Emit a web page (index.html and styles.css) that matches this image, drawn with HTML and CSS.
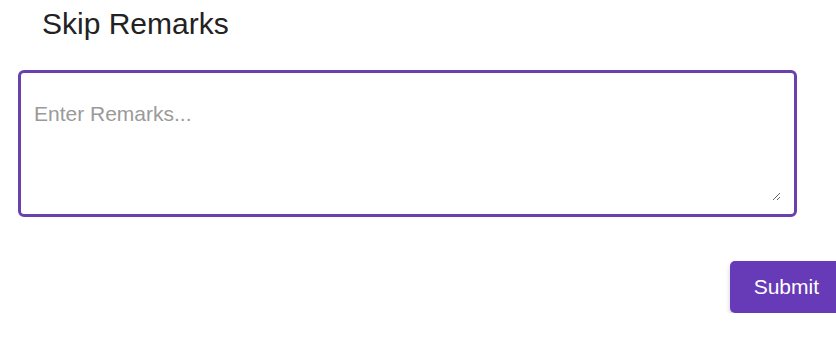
FILE: index.html
```html
<!DOCTYPE html>
<html>
<head>
<meta charset="utf-8">
<link rel="stylesheet" href="styles.css">
</head>
<body>
<div class="page">
  <h2 class="title">Skip Remarks</h2>
  <div class="field">
    <textarea class="remarks" placeholder="Enter Remarks..."></textarea>
  </div>
  <div class="actions">
    <button class="submit">Submit</button>
  </div>
</div>
</body>
</html>
```
FILE: styles.css
```css
html, body {
  margin: 0;
  padding: 0;
  background: #ffffff;
  overflow: hidden;
}
.page {
  font-family: "Liberation Sans", Arial, sans-serif;
  padding: 0 0 0 18px;
  display: flex;
  flex-direction: column;
}
.title {
  margin: 6px 0 0 24px;
  font-size: 30px;
  font-weight: 400;
  line-height: 36px;
  color: #222222;
}
.field {
  margin-top: 28px;
  box-sizing: border-box;
  width: 779px;
  height: 147px;
  border: 3px solid #6a40ad;
  border-radius: 6px;
  padding: 13px;
  display: flex;
}
.remarks {
  flex: 1;
  box-sizing: border-box;
  height: 115px;
  border: none;
  padding: 16px 0 0 0;
  margin: 0;
  font-family: "Liberation Sans", Arial, sans-serif;
  font-size: 21px;
  line-height: 24px;
  color: #333;
  outline: none;
  resize: vertical;
  background: transparent;
}
.remarks::placeholder {
  color: #9a9a9a;
}
.actions {
  display: flex;
  justify-content: flex-end;
  margin-top: 44px;
  margin-right: -7px;
}
.submit {
  background: #673ab7;
  color: #ffffff;
  border: none;
  border-radius: 5px;
  height: 52px;
  padding: 0 24px;
  font-family: "Liberation Sans", Arial, sans-serif;
  font-size: 21px;
  box-shadow: 0 3px 5px rgba(0,0,0,0.2);
}
```
